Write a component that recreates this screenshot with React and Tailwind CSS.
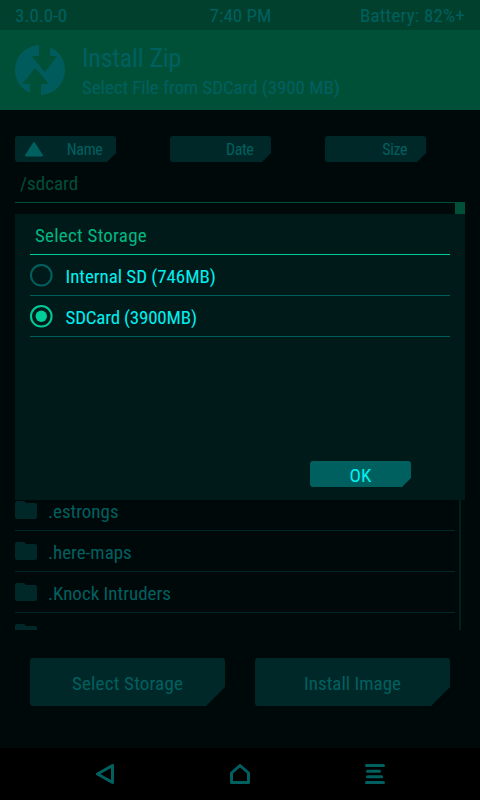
import { useState } from "react";

const columns = ["Name", "Date", "Size"];
const storages = ["Internal SD (746MB)", "SDCard (3900MB)"];
const folders = [".estrongs", ".here-maps", ".Knock Intruders"];

function Logo() {
  return (
    <svg className="h-[50px] w-[50px] shrink-0" viewBox="0 0 50 50">
      <circle cx="25" cy="25" r="25" fill="#005c5c" />
      <path d="M24 -1H35V11H42.3L29.7 27.3L16.7 11H24ZM20.3 22.7L33.7 39H26V51H15V39H7.3Z" fill="#005038" />
    </svg>
  );
}

function Folder() {
  return (
    <svg className="h-[18px] w-[22px] shrink-0" viewBox="0 0 22 18">
      <path d="M2 0H9L11 2H20Q22 2 22 4V16Q22 18 20 18H2Q0 18 0 16V2Q0 0 2 0Z" fill="#002828" />
    </svg>
  );
}

function Radio({ checked }) {
  return (
    <svg className="h-[23px] w-[23px] shrink-0" viewBox="0 0 23 23">
      <circle cx="11.3" cy="11.3" r="10.3" fill="none" strokeWidth="2" stroke={checked ? "#00cc99" : "#006060"} />
      {checked && <circle cx="11.3" cy="11.3" r="5.7" fill="#00cc99" />}
    </svg>
  );
}

export default function App() {
  const [selected, setSelected] = useState(1);

  return (
    <div className="relative flex h-[800px] w-[480px] flex-col overflow-hidden bg-[#00090a] font-['Roboto_Condensed',Roboto,sans-serif] text-[19px] leading-[22px] whitespace-nowrap text-[#006060] [font-stretch:75%]">
      {/* Status bar */}
      <div className="grid h-[30px] grid-cols-3 items-center bg-[#00402d] px-[15px] pt-[2px]">
        <span>3.0.0-0</span>
        <span className="pl-px text-center">7:40 PM</span>
        <span className="text-right tracking-[0.2px]">Battery: 82%+</span>
      </div>

      {/* Header */}
      <div className="flex h-20 items-center gap-[17px] bg-[#005038] px-[15px]">
        <Logo />
        <div>
          <h1 className="text-[26px] leading-[32px] tracking-[-0.2px]">Install Zip</h1>
          <p className="-mb-px pt-[3px] tracking-[-0.08px]">Select File from SDCard (3900 MB)</p>
        </div>
      </div>

      {/* Sort buttons */}
      <div className="mt-[26px] flex gap-[54px] px-[15px] text-[16px] tracking-[-0.4px]">
        {columns.map((col, i) => (
          <button
            key={col}
            className="flex h-[26px] w-[101px] items-center rounded-[3px] bg-[#002828] [clip-path:polygon(0_0,100%_0,100%_17px,92px_100%,0_100%)]"
          >
            <span className="flex w-[38px] justify-center">
              {i === 0 && (
                <svg className="h-4 w-[18px]" viewBox="0 0 18 16">
                  <path d="M9 2L17 14.5H1Z" fill="#006060" stroke="#006060" strokeWidth="2" strokeLinejoin="round" />
                </svg>
              )}
            </span>
            <span className="w-[65px] pt-[2px] pl-px text-center">{col}</span>
          </button>
        ))}
      </div>
      <div className="mx-[15px] h-[41px] border-b border-[#005038] pt-[11px] pl-[5px] text-[#005038]">/sdcard</div>
      <div className="mr-[15px] -mt-px h-[12px] w-[10px] self-end bg-[#005038]" />

      {/* File list */}
      <div className="mt-[276px] mr-[19px] ml-[15px] flex h-[140px] overflow-hidden border-r-2 border-[#002020]">
        <ul className="w-[440px]">
          {folders.map((name) => (
            <li key={name} className="flex h-[41px] items-center gap-[11px] border-b border-[#002828]">
              <Folder />
              <span className="pt-[3px]">{name}</span>
            </li>
          ))}
          <li className="flex h-[41px] items-center border-b border-[#002828]">
            <Folder />
          </li>
        </ul>
      </div>

      <div className="mt-[28px] flex gap-[30px] px-[30px]">
        {["Select Storage", "Install Image"].map((label) => (
          <button
            key={label}
            className="h-[48px] w-[195px] rounded-[3px] bg-[#002828] pt-[3px] tracking-[0.2px] last:tracking-normal [clip-path:polygon(0_0,100%_0,100%_29px,176px_100%,0_100%)]"
          >
            {label}
          </button>
        ))}
      </div>

      {/* Nav bar */}
      <div className="mt-auto flex h-[52px] items-center justify-around bg-black px-[37px]">
        <svg className="h-5 w-5" viewBox="0 0 20 20" fill="none" stroke="#006060" strokeWidth="3" strokeLinejoin="round">
          <path d="M17.5 1.5V18.5L2.5 10Z" />
        </svg>
        <svg className="h-5 w-5" viewBox="0 0 20 20" fill="none" stroke="#006060" strokeWidth="3" strokeLinejoin="round">
          <path d="M10 1.5L18.5 9V18.5H1.5V9Z" />
        </svg>
        <svg className="h-5 w-5" viewBox="0 0 20 20" stroke="#006060" strokeWidth="3" strokeLinecap="round">
          <path d="M1.5 1.5H18.5M2.5 7.2H14.5M2.5 12.8H16.5M1.5 18.5H18.5" />
        </svg>
      </div>

      {/* Storage dialog */}
      <div className="absolute top-[214px] left-[15px] flex h-[286px] w-[450px] flex-col bg-[#001a1a] px-[15px] text-[#00f0f0]">
        <h2 className="h-[41px] border-b border-[#00cc99] pt-[11px] pl-[5px] tracking-[0.25px] text-[#00b882]">
          Select Storage
        </h2>
        {storages.map((name, i) => (
          <div
            key={name}
            onClick={() => setSelected(i)}
            className="group flex h-[41px] items-center gap-[12px] border-b border-[#005c5c]"
          >
            <Radio checked={selected === i} />
            <span className="pt-[3px] pl-[0.5px] tracking-[-0.05px] group-nth-[3]:tracking-[-0.2px]">{name}</span>
          </div>
        ))}
        <button className="mt-auto mr-[39px] mb-[13px] h-[26px] w-[101px] self-end rounded-[3px] bg-[#006060] pt-[3px] [clip-path:polygon(0_0,100%_0,100%_17px,92px_100%,0_100%)]">
          OK
        </button>
      </div>
    </div>
  );
}
